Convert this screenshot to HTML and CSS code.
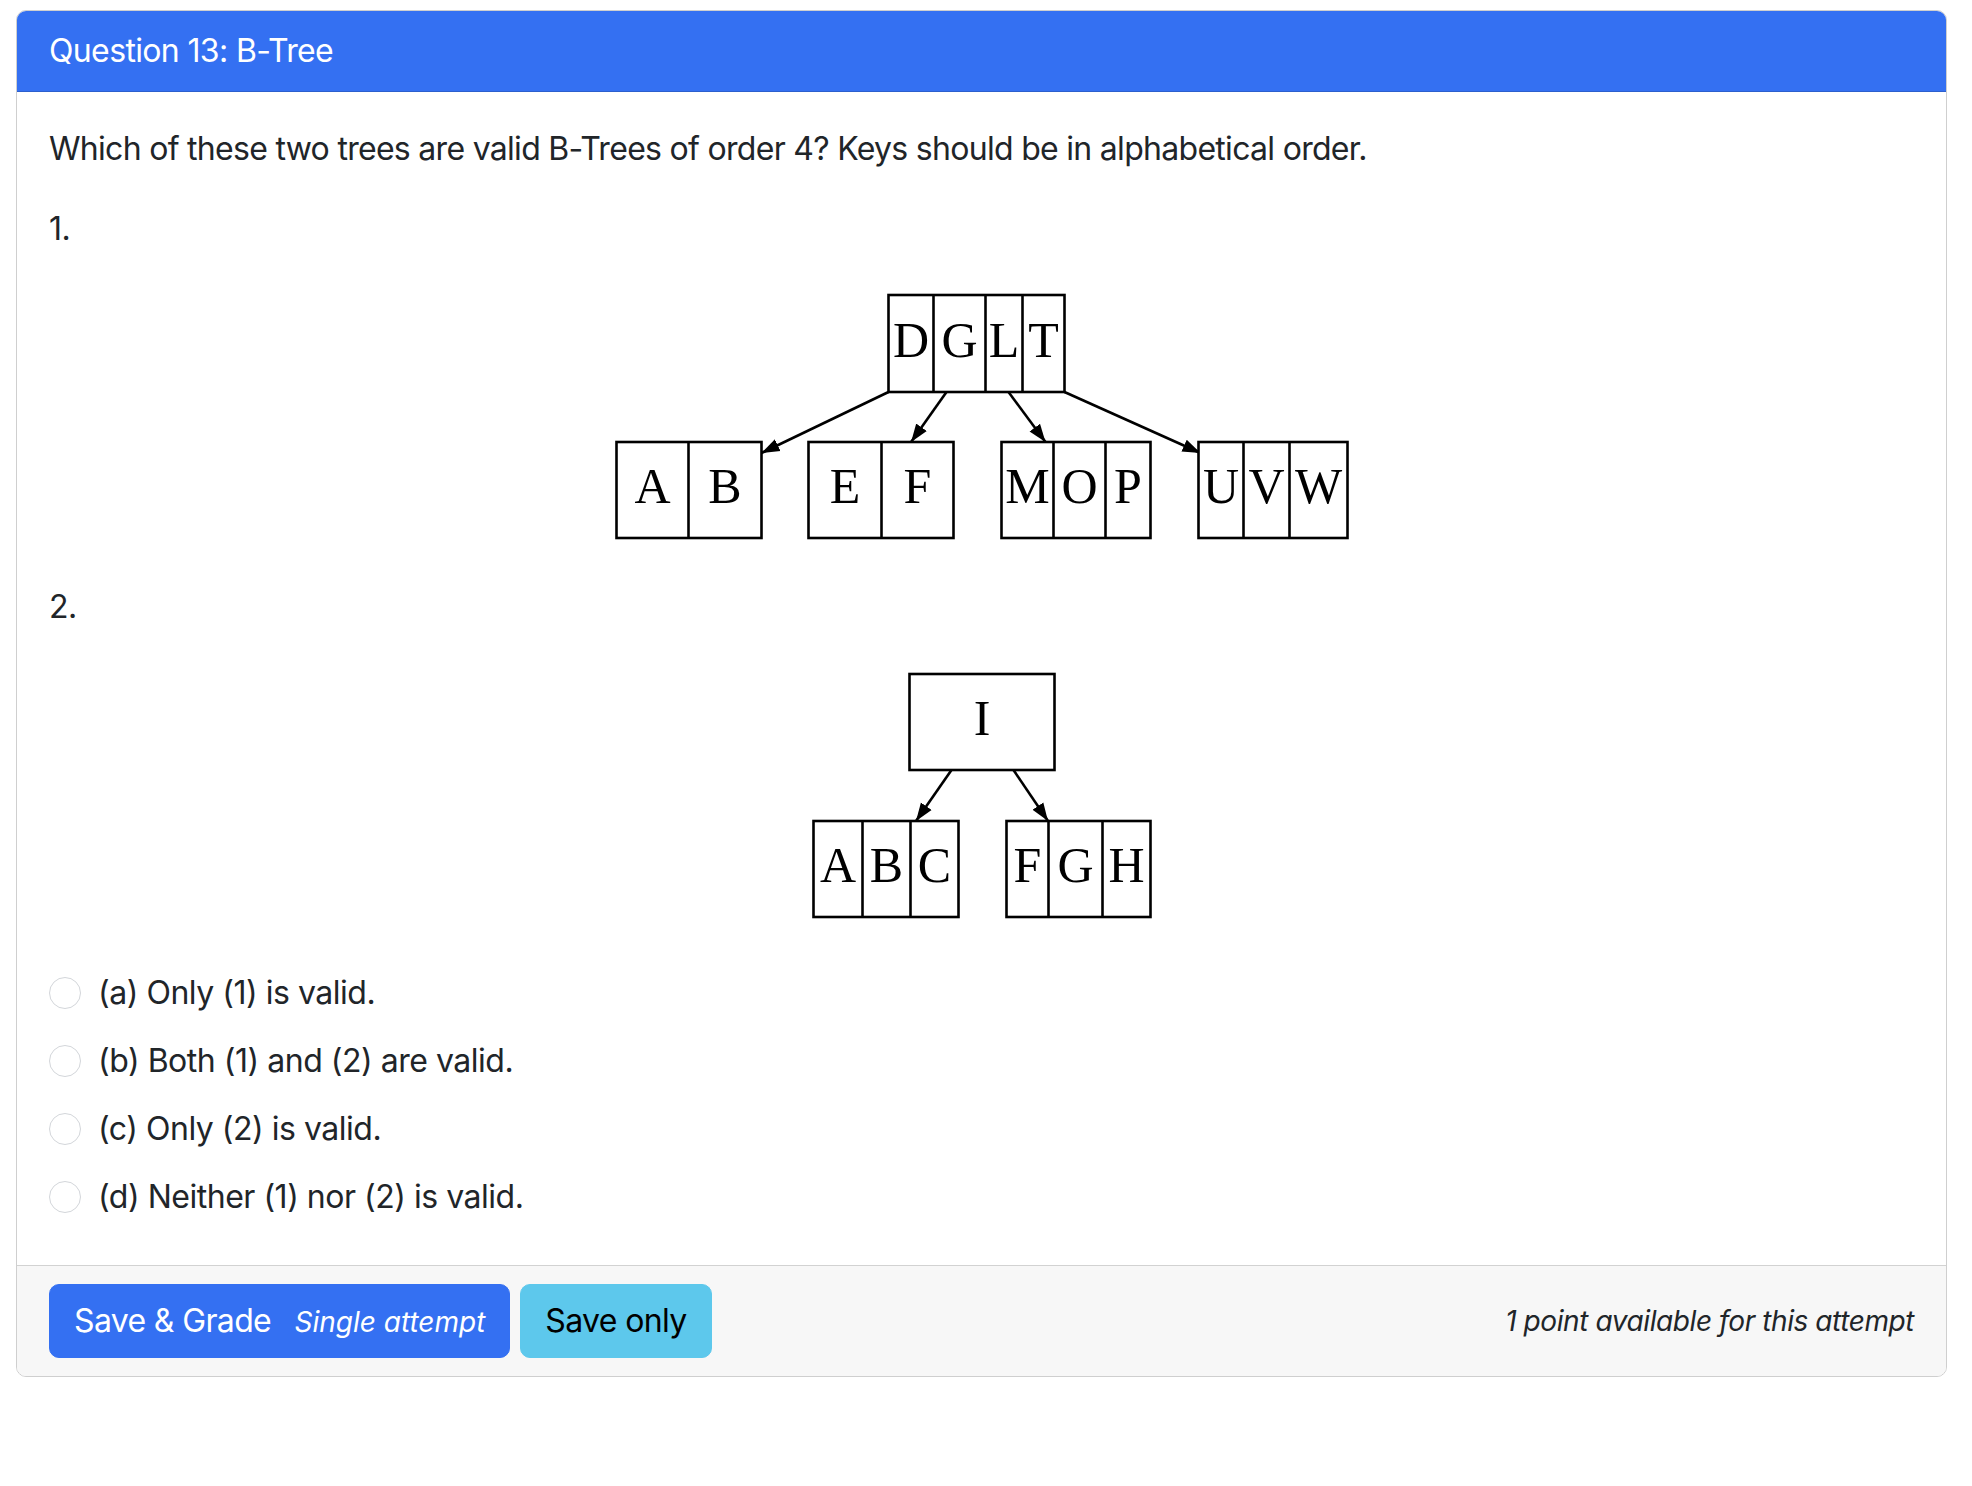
FILE: index.html
```html
<!DOCTYPE html>
<html lang="en">
<head>
<meta charset="utf-8">
<title>Question 13: B-Tree</title>
<link rel="stylesheet" href="styles.css">
</head>
<body>
<div class="card">
  <div class="card-header">Question 13: B-Tree</div>
  <div class="card-body">
    <p>Which of these two trees are valid B-Trees of order 4? Keys should be in alphabetical order.</p>
    <p>1.</p>
    <div class="figure">
      <svg class="tree" width="740" height="266" viewBox="611.5 285 740 266" xmlns="http://www.w3.org/2000/svg">
        <defs>
          <marker id="ah1" markerUnits="userSpaceOnUse" markerWidth="20" markerHeight="14" refX="18" refY="7" orient="auto">
            <path d="M0,0.5 L18,7 L0,13.5 z" fill="#000"/>
          </marker>
        </defs>
        <g class="edges">
          <line x1="888" y1="392" x2="761" y2="453" marker-end="url(#ah1)"/>
          <line x1="946" y1="392" x2="910.6" y2="442" marker-end="url(#ah1)"/>
          <line x1="1008" y1="392" x2="1045" y2="442" marker-end="url(#ah1)"/>
          <line x1="1064" y1="392" x2="1200" y2="453" marker-end="url(#ah1)"/>
        </g>
        <g class="nodes">
          <rect x="888" y="295" width="176" height="97"/>
          <line x1="933" y1="295" x2="933" y2="392"/>
          <line x1="985" y1="295" x2="985" y2="392"/>
          <line x1="1022" y1="295" x2="1022" y2="392"/>

          <rect x="616" y="442" width="145" height="96"/>
          <line x1="688" y1="442" x2="688" y2="538"/>

          <rect x="808" y="442" width="145" height="96"/>
          <line x1="881" y1="442" x2="881" y2="538"/>

          <rect x="1001" y="442" width="149" height="96"/>
          <line x1="1053" y1="442" x2="1053" y2="538"/>
          <line x1="1105" y1="442" x2="1105" y2="538"/>

          <rect x="1198" y="442" width="149" height="96"/>
          <line x1="1243" y1="442" x2="1243" y2="538"/>
          <line x1="1289" y1="442" x2="1289" y2="538"/>
        </g>
        <g class="keys">
          <text x="910.5" y="356.5">D</text>
          <text x="959" y="356.5">G</text>
          <text x="1003.5" y="356.5">L</text>
          <text x="1043" y="356.5">T</text>
          <text x="652" y="503">A</text>
          <text x="724.5" y="503">B</text>
          <text x="844.5" y="503">E</text>
          <text x="917" y="503">F</text>
          <text x="1027" y="503">M</text>
          <text x="1079" y="503">O</text>
          <text x="1127.5" y="503">P</text>
          <text x="1220.5" y="503">U</text>
          <text x="1266" y="503">V</text>
          <text x="1318" y="503">W</text>
        </g>
      </svg>
    </div>
    <p>2.</p>
    <div class="figure">
      <svg class="tree" width="740" height="266" viewBox="611.5 663 740 266" xmlns="http://www.w3.org/2000/svg">
        <defs>
          <marker id="ah2" markerUnits="userSpaceOnUse" markerWidth="20" markerHeight="14" refX="18" refY="7" orient="auto">
            <path d="M0,0.5 L18,7 L0,13.5 z" fill="#000"/>
          </marker>
        </defs>
        <g class="edges">
          <line x1="951" y1="770" x2="915.5" y2="821" marker-end="url(#ah2)"/>
          <line x1="1013" y1="770" x2="1047.5" y2="821" marker-end="url(#ah2)"/>
        </g>
        <g class="nodes">
          <rect x="909" y="674" width="145" height="96"/>

          <rect x="813" y="821" width="145" height="96"/>
          <line x1="862" y1="821" x2="862" y2="917"/>
          <line x1="910" y1="821" x2="910" y2="917"/>

          <rect x="1006" y="821" width="144" height="96"/>
          <line x1="1048" y1="821" x2="1048" y2="917"/>
          <line x1="1102" y1="821" x2="1102" y2="917"/>
        </g>
        <g class="keys">
          <text x="981.5" y="735">I</text>
          <text x="837.5" y="882">A</text>
          <text x="886" y="882">B</text>
          <text x="934" y="882">C</text>
          <text x="1027" y="882">F</text>
          <text x="1075" y="882">G</text>
          <text x="1126" y="882">H</text>
        </g>
      </svg>
    </div>
    <div class="options">
      <label class="option"><span class="radio"></span><span class="option-text">(a) Only (1) is valid.</span></label>
      <label class="option"><span class="radio"></span><span class="option-text">(b) Both (1) and (2) are valid.</span></label>
      <label class="option"><span class="radio"></span><span class="option-text">(c) Only (2) is valid.</span></label>
      <label class="option"><span class="radio"></span><span class="option-text">(d) Neither (1) nor (2) is valid.</span></label>
    </div>
  </div>
  <div class="card-footer">
    <div class="buttons">
      <button class="btn btn-primary" type="button">Save &amp; Grade <small class="btn-note">Single attempt</small></button>
      <button class="btn btn-info" type="button">Save only</button>
    </div>
    <small class="avail">1 point available for this attempt</small>
  </div>
</div>
</body>
</html>
```

FILE: styles.css
```css
html, body {
  background: #ffffff;
}

body {
  margin: 0;
  padding: 10px 25px 0 16px;
  font-family: Inter, "Noto Sans", "Liberation Sans", sans-serif;
  font-size: 32px;
  line-height: 1.5;
  letter-spacing: -0.02em;
  color: #212529;
}

.card {
  border: 1px solid #cfcfcf;
  border-radius: 10px;
  overflow: hidden;
  background: #ffffff;
}

.card-header {
  background: #3470f2;
  color: #ffffff;
  padding: 16px 32px;
  border-bottom: 1px solid #2c5fcd;
}

.card-body {
  padding: 33px 32px 32px;
}

.card-body p {
  margin: 0 0 32px;
}

.card-body > p:first-child {
  letter-spacing: -0.022em;
}

.figure {
  height: 266px;
  margin-bottom: 32px;
  display: flex;
  justify-content: center;
}

.tree {
  display: block;
}

.tree .edges line {
  stroke: #000;
  stroke-width: 2.6;
}

.tree .nodes rect,
.tree .nodes line {
  fill: #ffffff;
  stroke: #000;
  stroke-width: 2.6;
}

.tree .keys text {
  font-family: "Liberation Serif", "Times New Roman", serif;
  font-size: 50px;
  text-anchor: middle;
  fill: #000;
  letter-spacing: 0;
}

.options {
  display: flex;
  flex-direction: column;
}

.option {
  display: flex;
  align-items: center;
  padding: 8px 0 12px;
}

.option-text {
  letter-spacing: -0.015em;
}

.radio {
  flex: none;
  width: 32px;
  height: 32px;
  box-sizing: border-box;
  border: 1px solid #d3d6da;
  border-radius: 50%;
  background: #ffffff;
  margin-right: 17px;
}

.card-footer {
  background: #f7f7f7;
  border-top: 1px solid #d2d2d2;
  padding: 18px 32px;
  display: flex;
  align-items: center;
  justify-content: space-between;
}

.buttons {
  display: flex;
  gap: 10px;
}

.btn {
  font-family: inherit;
  font-size: 32px;
  line-height: 1.5;
  letter-spacing: -0.02em;
  padding: 12px 24px;
  border: 1px solid transparent;
  border-radius: 10px;
  cursor: pointer;
}

.btn-primary {
  background: #3470f2;
  border-color: #3470f2;
  color: #ffffff;
}

.btn-info {
  background: #5dc8ec;
  border-color: #5dc8ec;
  color: #000000;
}

.btn-note {
  font-size: 28px;
  font-style: italic;
  letter-spacing: 0;
  margin-left: 15px;
}

.avail {
  font-size: 28px;
  font-style: italic;
  letter-spacing: -0.015em;
  color: #212529;
}
```
